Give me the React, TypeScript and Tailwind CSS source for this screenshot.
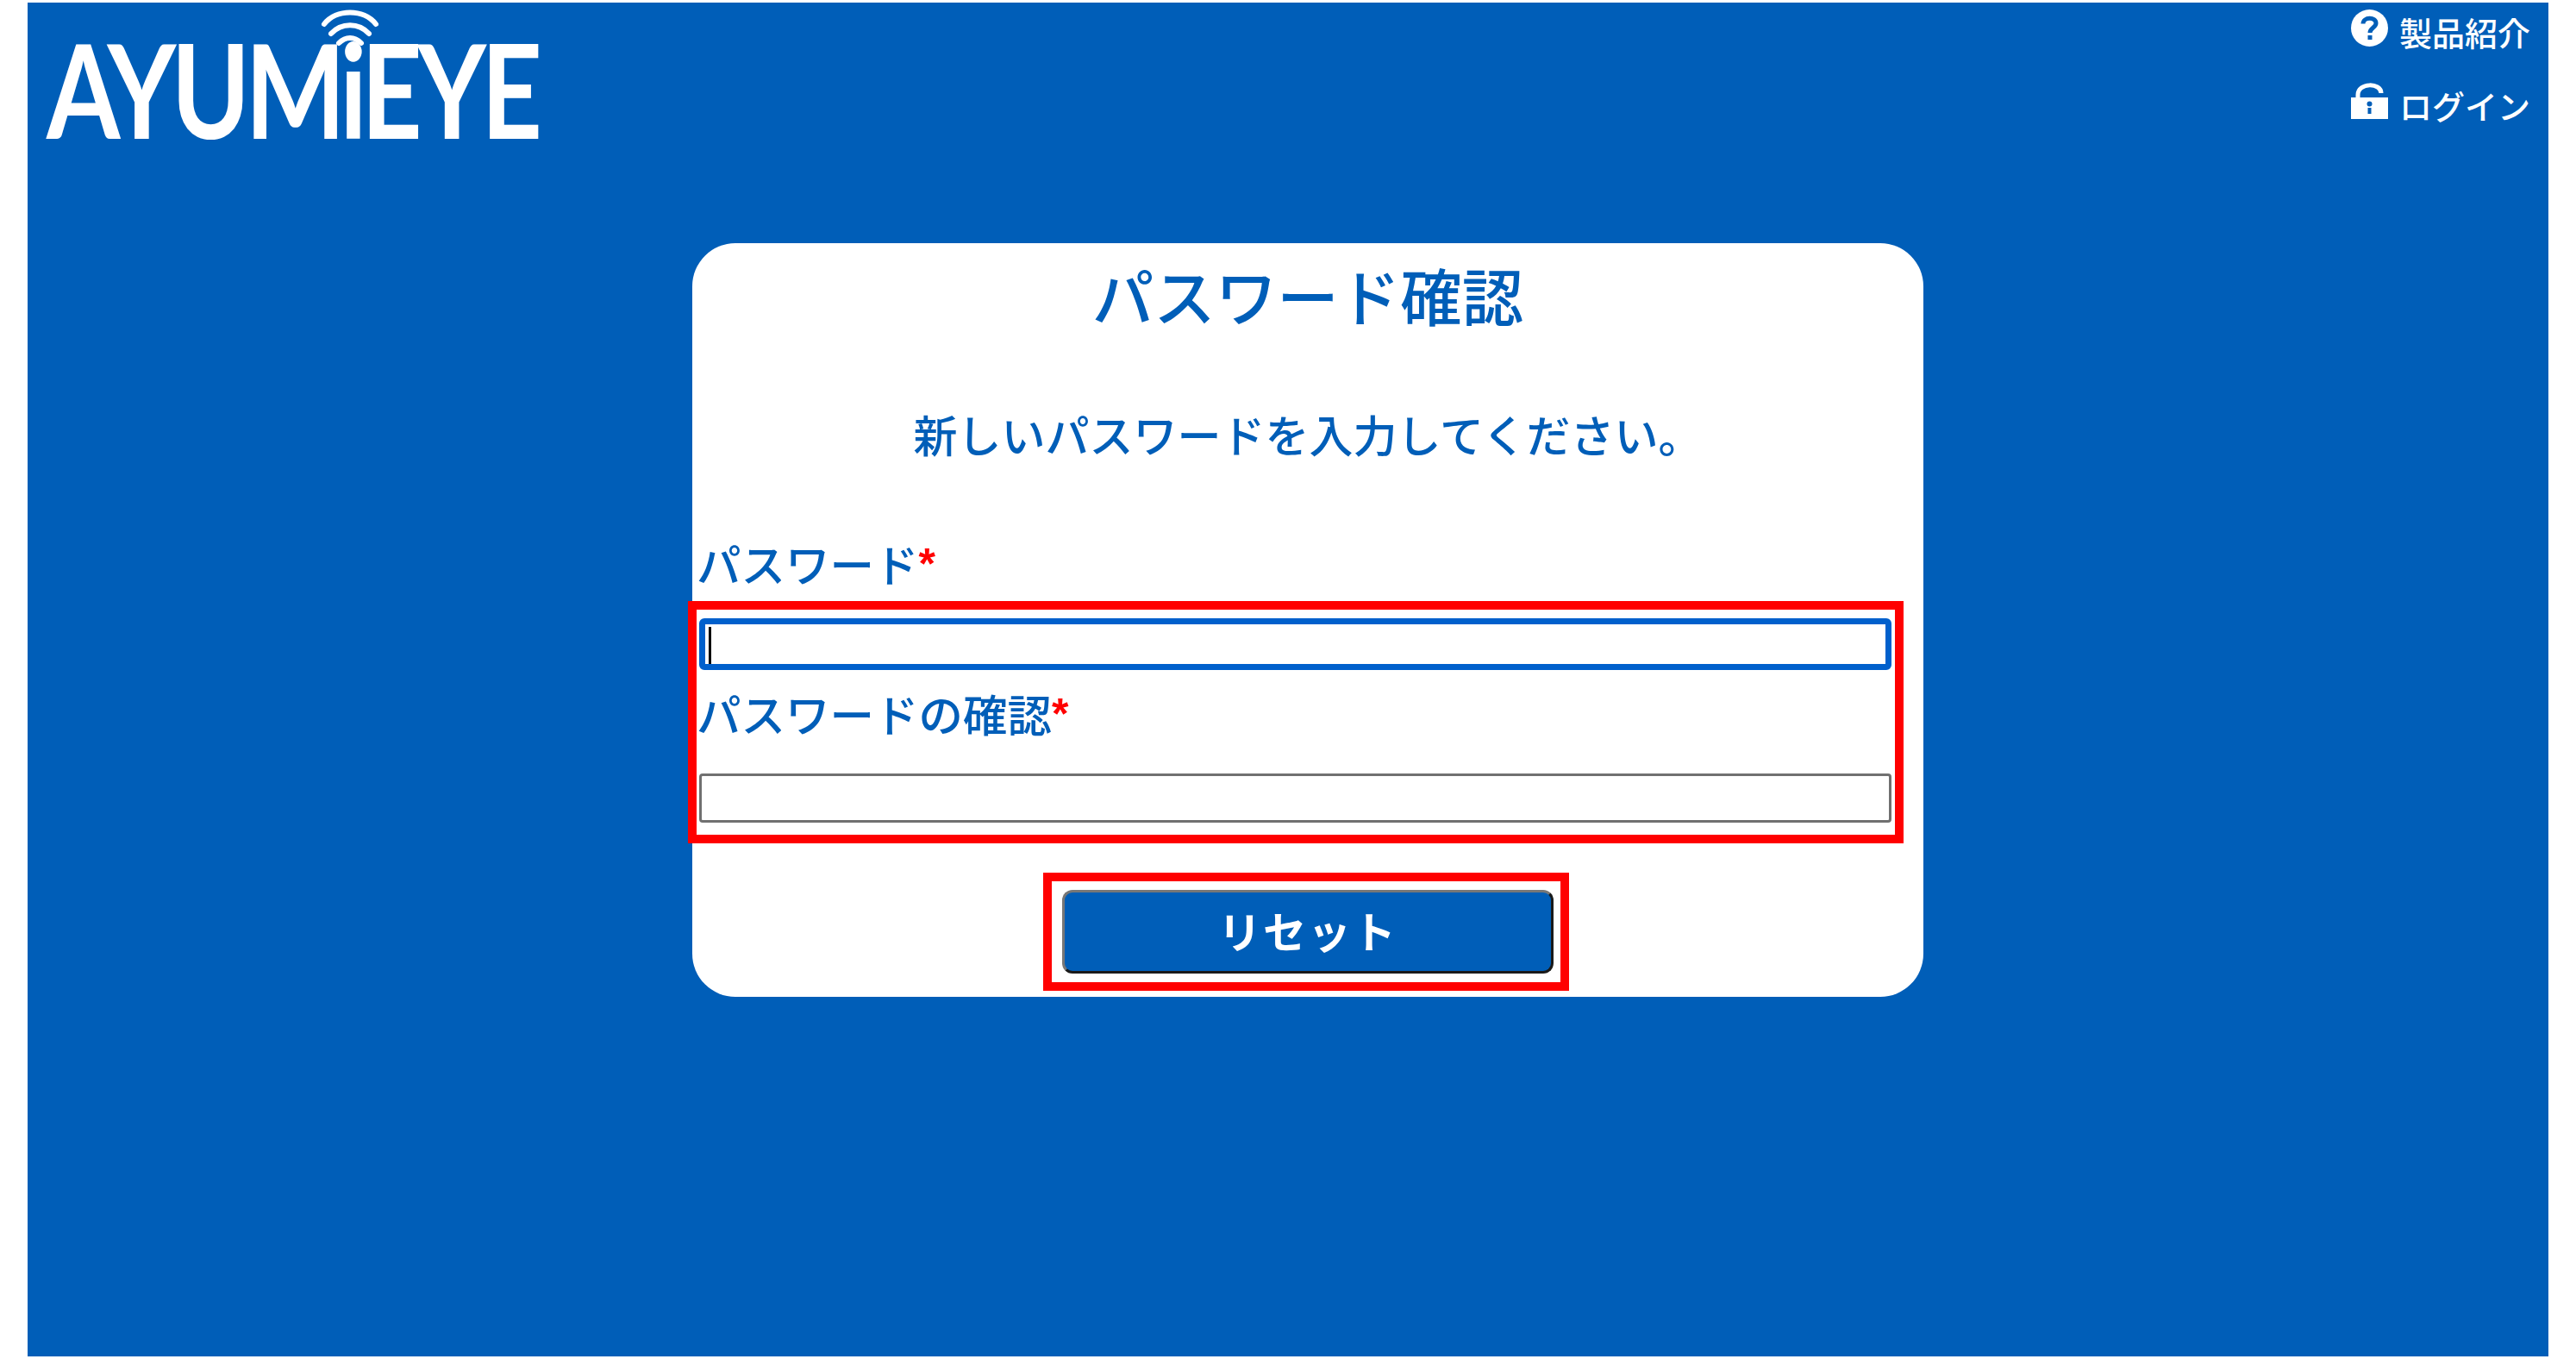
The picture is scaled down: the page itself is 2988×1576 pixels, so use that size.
const cjk = "font-['Noto_Sans_CJK_JP','Noto_Sans',sans-serif]";

function WifiMark() {
  return (
    <svg className="absolute left-[318px] top-[7px]" width="68" height="48" viewBox="0 0 68 48" fill="none" stroke="white" strokeWidth="6" strokeLinecap="round">
      <path d="M4 18 C18 0 50 0 64 18" />
      <path d="M12 29 C24 16 44 16 56 29" />
      <path d="M21 40 C29 32 39 32 47 40" />
    </svg>
  );
}

function HelpIcon() {
  return (
    <svg width="43" height="43" viewBox="0 0 43 43">
      <circle cx="21.5" cy="21.5" r="21.5" fill="white" />
      <path d="M14 16.5 C14 8.5 29 8 29 16 C29 21 22 21 22 27" fill="none" stroke="#005EB8" strokeWidth="5" />
      <rect x="19.5" y="30" width="5" height="5" fill="#005EB8" />
    </svg>
  );
}

function LockIcon() {
  return (
    <svg width="43" height="42" viewBox="0 0 43 42">
      <path d="M8 20 V14 C8 -0.5 35 -0.5 35 12" fill="none" stroke="white" strokeWidth="5" />
      <rect x="0" y="17" width="43" height="25" fill="white" />
      <circle cx="21.5" cy="24.5" r="3" fill="#005EB8" />
      <rect x="19.5" y="29" width="4" height="7" fill="#005EB8" />
    </svg>
  );
}

function Req() {
  return <span className="relative -top-[4px] font-['Liberation_Sans',sans-serif] text-[50px] font-bold leading-none text-[#ff0000]">*</span>;
}

export default function App() {
  return (
    <div className={`h-[1576px] w-[2988px] bg-white py-[3px] pl-[32px] pr-[32px] ${cjk}`}>
      <div className="h-full bg-[#005EB8]">
        <header className="flex h-[279px] justify-between">
          <div className="relative ml-[22px] h-[160px] w-[600px]">
            <WifiMark />
            <div className="mt-[14px] origin-left scale-x-[0.81] whitespace-nowrap font-['Lato',sans-serif] text-[152px] font-bold leading-[170px] tracking-[-7px] text-white">
              AYUMiEYE
            </div>
          </div>
          <nav className="mr-[20px] flex w-[209px] flex-col gap-[36px] pt-[8px] text-[38px] font-medium leading-[46px] text-white">
            <a className="flex items-start gap-[13px]">
              <HelpIcon />
              <span className="mt-[3px]">製品紹介</span>
            </a>
            <a className="flex items-start gap-[13px]">
              <LockIcon />
              <span className="mt-[3px]">ログイン</span>
            </a>
          </nav>
        </header>

        <main className="ml-[771px] h-[874px] w-[1428px] rounded-[50px] bg-white pt-[9px] text-[#005EB8]">
          <h1 className="text-center text-[71.5px] font-medium leading-[100px]">パスワード確認</h1>
          <p className="mt-[87px] text-center text-[51px] font-medium leading-[50px]">新しいパスワードを入力してください。</p>
          <label className="mt-[95px] block h-[60px] pl-[5px] text-[51.5px] font-medium leading-[60px]">
            パスワード<Req />
          </label>

          <div className="-ml-[5px] mt-[14px] w-[1410px] border-[10px] border-[#ff0000] pb-[14px] pl-[3px] pr-[4px] pt-[10px]">
            <div className="relative">
              <input className="block h-[60px] w-full rounded-[6px] border-[7px] border-[#0060CC] bg-white outline-none" type="password" />
              <span className="absolute left-[11px] top-[10px] h-[43px] w-[3px] bg-black" />
            </div>
            <label className="-ml-[3px] mt-[20px] block h-[60px] text-[51.5px] font-medium leading-[60px]">
              パスワードの確認<Req />
            </label>
            <input className="mt-[40px] block h-[57px] w-full rounded-[4px] border-[3px] border-[#707070] bg-white" type="password" />
          </div>

          <div className="ml-[407px] mt-[34px] w-[610px] border-[10px] border-[#ff0000] py-[10px] pl-[12px] pr-[8px]">
            <button className="block h-[97px] w-[570px] rounded-[12px] border-[3px] border-b-[#1a1a1a] border-l-[#777777] border-r-[#1a1a1a] border-t-[#777777] bg-[#005EB8] pb-[5px] text-[50px] font-bold leading-none tracking-[2px] text-white">
              リセット
            </button>
          </div>
        </main>
      </div>
    </div>
  );
}
